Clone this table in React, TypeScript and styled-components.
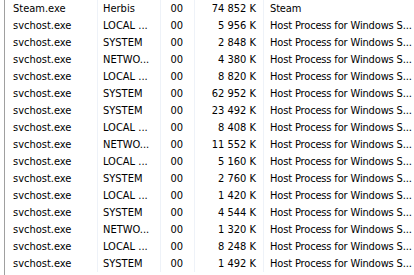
import styled, { createGlobalStyle } from 'styled-components';

const GlobalStyle = createGlobalStyle`
  html, body {
    margin: 0;
    padding: 0;
    background: #ffffff;
  }
  body {
    font-family: "DejaVu Sans Condensed", "Liberation Sans", sans-serif;
    font-size: 11px;
    color: #000000;
  }
`;

interface Process {
    name: string,
    user: string,
    session: string,
    memory: string,
    description: string,
}

// the column is narrower than the text, the list shows it cut like this
const HOST = 'Host Process for Windows S...';

const processes: Process[] = [
    { name: 'Steam.exe', user: 'Herbis', session: '00', memory: '74 852 K', description: 'Steam' },
    { name: 'svchost.exe', user: 'LOCAL ...', session: '00', memory: '5 956 K', description: HOST },
    { name: 'svchost.exe', user: 'SYSTEM', session: '00', memory: '2 848 K', description: HOST },
    { name: 'svchost.exe', user: 'NETWO...', session: '00', memory: '4 380 K', description: HOST },
    { name: 'svchost.exe', user: 'LOCAL ...', session: '00', memory: '8 820 K', description: HOST },
    { name: 'svchost.exe', user: 'SYSTEM', session: '00', memory: '62 952 K', description: HOST },
    { name: 'svchost.exe', user: 'SYSTEM', session: '00', memory: '23 492 K', description: HOST },
    { name: 'svchost.exe', user: 'LOCAL ...', session: '00', memory: '8 408 K', description: HOST },
    { name: 'svchost.exe', user: 'NETWO...', session: '00', memory: '11 552 K', description: HOST },
    { name: 'svchost.exe', user: 'LOCAL ...', session: '00', memory: '5 160 K', description: HOST },
    { name: 'svchost.exe', user: 'SYSTEM', session: '00', memory: '2 760 K', description: HOST },
    { name: 'svchost.exe', user: 'LOCAL ...', session: '00', memory: '1 420 K', description: HOST },
    { name: 'svchost.exe', user: 'SYSTEM', session: '00', memory: '4 544 K', description: HOST },
    { name: 'svchost.exe', user: 'NETWO...', session: '00', memory: '1 320 K', description: HOST },
    { name: 'svchost.exe', user: 'LOCAL ...', session: '00', memory: '8 248 K', description: HOST },
    { name: 'svchost.exe', user: 'SYSTEM', session: '00', memory: '1 492 K', description: HOST },
];

const App = () => {
    return (
        <>
            <GlobalStyle />
            <Frame>
                <List>
                    {processes.map((p, i) => (
                        <Row key={i}>
                            <NameCell>{p.name}</NameCell>
                            <UserCell>{p.user}</UserCell>
                            <SessionCell>{p.session}</SessionCell>
                            <MemoryCell>{p.memory}</MemoryCell>
                            <DescriptionCell>{p.description}</DescriptionCell>
                        </Row>
                    ))}
                </List>
            </Frame>
        </>
    );
}

export default App;

const Frame = styled.div`
    width: 414px;
    height: 275px;
    overflow: hidden;
    padding-left: 4px;
    box-sizing: border-box;
    background: #ffffff;
`

const List = styled.div`
    border-left: 1px solid #a0a0a0;
    height: 100%;
    display: flex;
    flex-direction: column;
`

const Row = styled.div`
    display: grid;
    grid-template-columns: 92px 63px 34px 69px 1fr;
    height: 17px;
    line-height: 17px;
    flex-shrink: 0;
`

const Cell = styled.div`
    white-space: nowrap;
    overflow: hidden;
    box-sizing: border-box;
`

const NameCell = styled(Cell)`
    padding-left: 8px;
`

const UserCell = styled(Cell)`
    border-left: 1px solid #eef2f8;
    padding-left: 5px;
`

const SessionCell = styled(Cell)`
    border-left: 1px solid #eef2f8;
    text-align: right;
    padding-right: 11px;
`

const MemoryCell = styled(Cell)`
    border-left: 1px solid #eef2f8;
    text-align: right;
    padding-right: 7px;
`

const DescriptionCell = styled(Cell)`
    border-left: 1px solid #eef2f8;
    padding-left: 6px;
    letter-spacing: -0.15px;
`
